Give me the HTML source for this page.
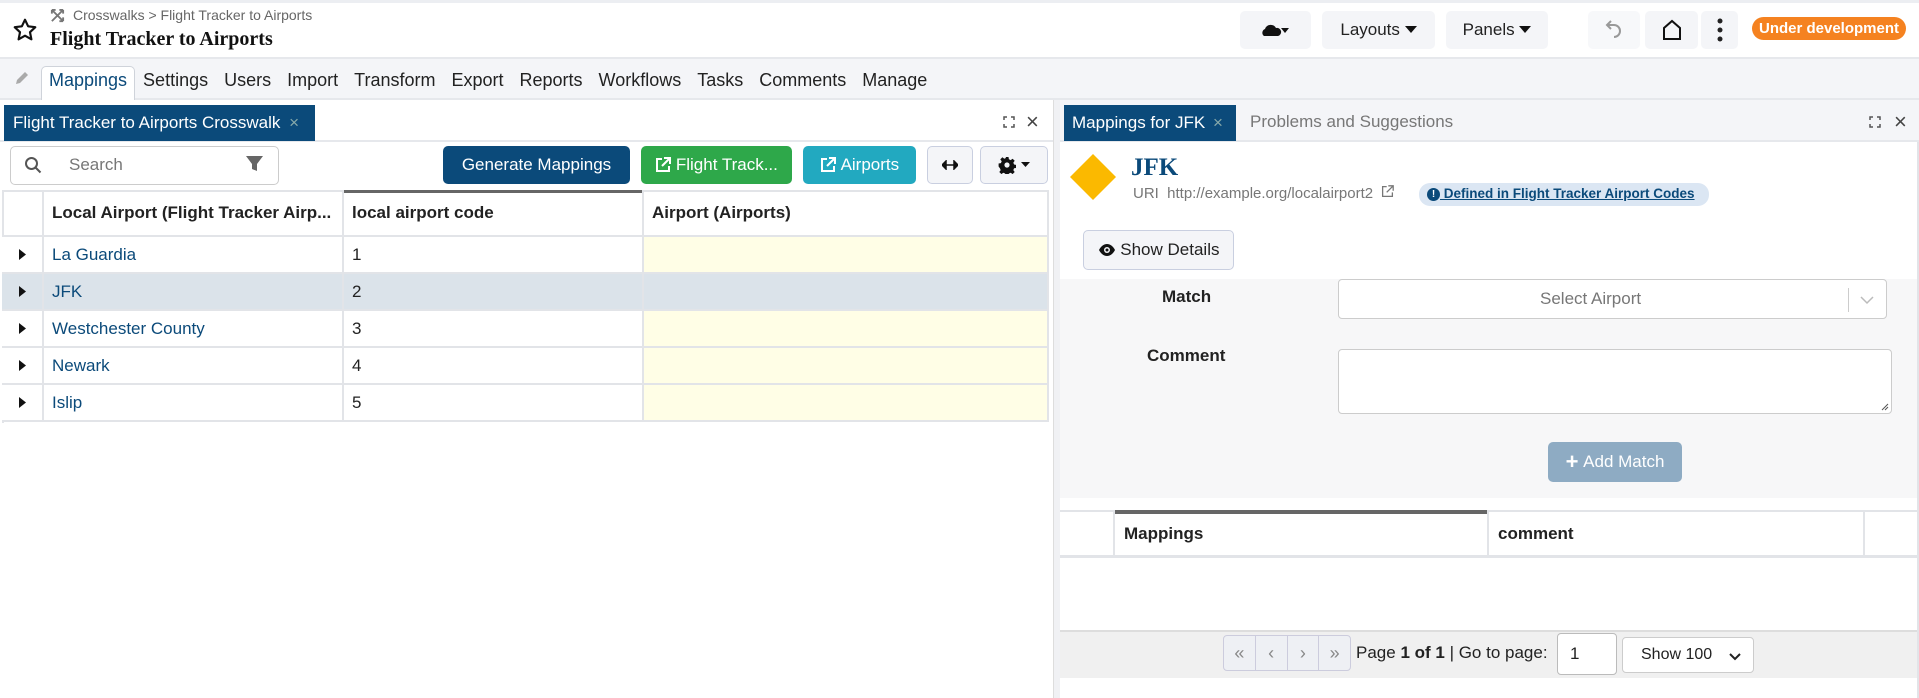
<!DOCTYPE html>
<html><head><meta charset="utf-8"><style>
*{box-sizing:border-box;margin:0;padding:0}
body{width:1919px;height:698px;position:relative;overflow:hidden;background:#fff;font-family:"Liberation Sans",sans-serif;color:#222;font-size:17px}
.a{position:absolute}
.btn{position:absolute;border-radius:5px;display:flex;align-items:center;justify-content:center;font-size:17px}
.nav span{margin-right:16px}
.cell{position:absolute;border-right:2px solid #e2e4e8;border-bottom:2px solid #e2e4e8;display:flex;align-items:center;padding-left:8px;font-size:17px}
</style></head><body>
<div class="a" style="left:0;top:0;width:1919px;height:3px;background:#eceef2"></div>
<svg class="a" style="left:12px;top:17px" width="26" height="26" viewBox="0 0 24 24"><path d="M12 2.5l2.9 6.1 6.6.8-4.9 4.6 1.3 6.6L12 17.3l-5.9 3.3 1.3-6.6L2.5 9.4l6.6-.8z" fill="none" stroke="#111" stroke-width="2" stroke-linejoin="round"/></svg>
<svg class="a" style="left:50px;top:8px" width="15" height="15" viewBox="0 0 16 16"><path d="M2 2l12 12M14 2L2 14M2 2h4M2 2v4M14 14h-4M14 14v-4M14 2h-4M14 2v4" stroke="#777" stroke-width="2" fill="none"/></svg>
<div class="a" style="left:73px;top:7px;font-size:14px;color:#666">Crosswalks &gt; Flight Tracker to Airports</div>
<div class="a" style="left:50px;top:28px;font-family:'Liberation Serif',serif;font-weight:bold;font-size:20px;color:#111">Flight Tracker to Airports</div>
<div class="btn" style="left:1240px;top:11px;width:71px;height:38px;background:#f4f5f8">
<svg width="30" height="16" viewBox="0 0 30 16"><path d="M3 14a4 4 0 0 1 1-7 6 6 0 0 1 11-1 4 4 0 0 1 2 8z" fill="#111"/><path d="M20 6h8l-4 5z" fill="#111"/></svg></div>
<div class="btn" style="left:1322px;top:11px;width:113px;height:38px;background:#f4f5f8">Layouts&nbsp;<svg width="12" height="8"><path d="M0 0h12l-6 7z" fill="#111"/></svg></div>
<div class="btn" style="left:1446px;top:11px;width:102px;height:38px;background:#f4f5f8">Panels&nbsp;<svg width="12" height="8"><path d="M0 0h12l-6 7z" fill="#111"/></svg></div>
<div class="btn" style="left:1588px;top:11px;width:52px;height:38px;background:#f7f8fa"><svg width="20" height="22" viewBox="0 0 20 22"><path d="M7 2L3 6l4 4M3 6h7a6 6 0 0 1 0 12" fill="none" stroke="#999" stroke-width="2"/></svg></div>
<div class="btn" style="left:1645px;top:11px;width:53px;height:38px;background:#f4f5f8"><svg width="22" height="22" viewBox="0 0 22 22"><path d="M3 20V9l8-7 8 7v11z" fill="none" stroke="#111" stroke-width="2"/></svg></div>
<div class="btn" style="left:1701px;top:11px;width:37px;height:38px;background:#f4f5f8"><svg width="6" height="24"><circle cx="3" cy="3" r="2.5" fill="#222"/><circle cx="3" cy="12" r="2.5" fill="#222"/><circle cx="3" cy="21" r="2.5" fill="#222"/></svg></div>
<div class="btn" style="left:1752px;top:17px;width:154px;height:23px;border-radius:12px;background:#f58220;color:#fff;font-weight:bold;font-size:15px">Under development</div>
<div class="a" style="left:0;top:57px;width:1919px;height:43px;background:#f4f5f8;border-top:2px solid #e6e8ec;border-bottom:2px solid #e6e8ec"></div>
<svg class="a" style="left:14px;top:70px" width="16" height="16" viewBox="0 0 16 16"><path d="M2 14l1-4 8-8 3 3-8 8z" fill="#aaa"/></svg>
<div class="a" style="left:41px;top:66px;width:94px;height:34px;background:#fff;border:1px solid #cfd3da;border-bottom:none;border-radius:5px 5px 0 0"></div>
<div class="a nav" style="left:49px;top:70px;font-size:18px;color:#222;white-space:nowrap"><span style="color:#0b4a7a">Mappings</span><span>Settings</span><span>Users</span><span>Import</span><span>Transform</span><span>Export</span><span>Reports</span><span>Workflows</span><span>Tasks</span><span>Comments</span><span>Manage</span></div>
<div class="a" style="left:0;top:100px;width:1058px;height:42px;background:#fff;border-bottom:2px solid #e6e8ec"></div>
<div class="a" style="left:4px;top:105px;width:311px;height:36px;background:#0b4a7a;color:#fff;font-size:17px;padding:8px 0 0 9px;white-space:nowrap">Flight Tracker to Airports Crosswalk <span style="color:#8aa;margin-left:4px">×</span></div>
<svg class="a" style="left:1003px;top:116px" width="12" height="12"><path d="M1 4V1h3M8 1h3v3M11 8v3H8M4 11H1V8" stroke="#555" stroke-width="1.5" fill="none"/></svg>
<div class="a" style="left:1026px;top:109px;font-size:22px;color:#444">×</div>
<div class="a" style="left:1053px;top:100px;width:7px;height:598px;background:#f0f1f4;border-left:1px solid #ddd"></div>
<div class="a" style="left:10px;top:146px;width:269px;height:39px;border:1px solid #ccc;border-radius:5px"></div>
<svg class="a" style="left:24px;top:156px" width="18" height="18" viewBox="0 0 18 18"><circle cx="7.5" cy="7.5" r="5.5" stroke="#555" stroke-width="2" fill="none"/><path d="M11.5 11.5l5 5" stroke="#555" stroke-width="2"/></svg>
<div class="a" style="left:69px;top:155px;color:#777">Search</div>
<svg class="a" style="left:246px;top:155px" width="17" height="17"><path d="M0 1h17l-6 8v7l-5-2V9z" fill="#666"/></svg>
<div class="btn" style="left:443px;top:146px;width:187px;height:38px;background:#0b4a7a;color:#fff">Generate Mappings</div>
<div class="btn" style="left:641px;top:146px;width:151px;height:38px;background:#2ea84a;color:#fff"><svg width="16" height="16" viewBox="0 0 16 16"><path d="M7 2H2v12h12V9M9 1h6v6M15 1L7 9" stroke="#fff" stroke-width="2" fill="none"/></svg>&nbsp;Flight Track...</div>
<div class="btn" style="left:803px;top:146px;width:113px;height:38px;background:#22a9c0;color:#fff"><svg width="16" height="16" viewBox="0 0 16 16"><path d="M7 2H2v12h12V9M9 1h6v6M15 1L7 9" stroke="#fff" stroke-width="2" fill="none"/></svg>&nbsp;Airports</div>
<div class="btn" style="left:927px;top:146px;width:46px;height:38px;background:#f4f5f8;border:1px solid #c9cfe0"><svg width="16" height="10"><path d="M0 5l4-4v8zM16 5l-4-4v8zM3 5h10" fill="#111" stroke="#111" stroke-width="1.5"/></svg></div>
<div class="btn" style="left:980px;top:146px;width:68px;height:38px;background:#f4f5f8;border:1px solid #c9cfe0"><svg width="18" height="18" viewBox="0 0 18 18"><path d="M7.5 1h3l.4 2.3 1.8.8 1.9-1.4 2.1 2.1-1.4 1.9.8 1.8 2.3.4v3l-2.3.4-.8 1.8 1.4 1.9-2.1 2.1-1.9-1.4-1.8.8-.4 2.3h-3l-.4-2.3-1.8-.8-1.9 1.4-2.1-2.1 1.4-1.9-.8-1.8L.6 10.5v-3l2.3-.4.8-1.8-1.4-1.9 2.1-2.1 1.9 1.4 1.8-.8z" fill="#111"/><circle cx="9" cy="9" r="2.6" fill="#f4f5f8"/></svg>&nbsp;<svg width="9" height="6"><path d="M0 0h9l-4.5 5z" fill="#111"/></svg></div>
<div class="a" style="left:2px;top:190px;width:1047px;height:233px;border:2px solid #e2e4e8;border-right:none;border-bottom:none"></div>
<div class="a" style="left:344px;top:190px;width:300px;height:3px;background:#666"></div>
<div class="cell" style="left:2px;top:190px;width:42px;height:47px"></div>
<div class="cell" style="left:44px;top:190px;width:300px;height:47px;font-weight:bold">Local Airport (Flight Tracker Airp...</div>
<div class="cell" style="left:344px;top:190px;width:300px;height:47px;font-weight:bold">local airport code</div>
<div class="cell" style="left:644px;top:190px;width:405px;height:47px;font-weight:bold">Airport (Airports)</div>
<div id="rows"></div>
<div class="a" style="left:1060px;top:100px;width:859px;height:42px;background:#f4f5f8;border-bottom:2px solid #e6e8ec"></div>
<div class="a" style="left:1064px;top:105px;width:172px;height:36px;background:#0b4a7a;color:#fff;padding:8px 0 0 8px;white-space:nowrap">Mappings for JFK <span style="color:#8aa;margin-left:3px">×</span></div>
<div class="a" style="left:1250px;top:112px;color:#777">Problems and Suggestions</div>
<svg class="a" style="left:1869px;top:116px" width="12" height="12"><path d="M1 4V1h3M8 1h3v3M11 8v3H8M4 11H1V8" stroke="#555" stroke-width="1.5" fill="none"/></svg>
<div class="a" style="left:1894px;top:109px;font-size:22px;color:#444">×</div>
<div class="a" style="left:1917px;top:142px;width:2px;height:556px;background:#e2e4e8"></div>
<svg class="a" style="left:1068px;top:152px" width="50" height="50"><path d="M25 2l23 23-23 23L2 25z" fill="#fbb900"/></svg>
<div class="a" style="left:1131px;top:154px;font-family:'Liberation Serif',serif;font-weight:bold;font-size:25px;color:#0b4a7a">JFK</div>
<div class="a" style="left:1133px;top:185px;font-size:15px;color:#777;white-space:nowrap">URI&nbsp; http://example.org/localairport2 &nbsp;<svg width="13" height="13" viewBox="0 0 16 16"><path d="M7 2H2v12h12V9M9 1h6v6M15 1L7 9" stroke="#777" stroke-width="1.6" fill="none"/></svg></div>
<div class="a" style="left:1419px;top:183px;width:290px;height:23px;background:#dbe6f3;border-radius:11px;font-size:13.5px;font-weight:bold;color:#0b4a7a;padding:3px 0 0 8px;text-decoration:underline;white-space:nowrap"><span style="display:inline-block;width:13px;height:13px;border-radius:7px;background:#0b4a7a;color:#fff;font-size:10px;text-align:center;line-height:13px;vertical-align:1px;text-decoration:none">!</span> Defined in Flight Tracker Airport Codes</div>
<div class="btn" style="left:1083px;top:230px;width:151px;height:40px;background:#f4f5f8;border:1px solid #c9cfe0">
<svg width="18" height="14" viewBox="0 0 18 14"><path d="M1 7c2-4 5-6 8-6s6 2 8 6c-2 4-5 6-8 6S3 11 1 7z" fill="#111"/><circle cx="9" cy="7" r="3" fill="#f4f5f8"/><circle cx="9" cy="7" r="1.5" fill="#111"/></svg>&nbsp;Show Details</div>
<div class="a" style="left:1060px;top:279px;width:857px;height:219px;background:#f7f7f8"></div>
<div class="a" style="left:1162px;top:287px;font-weight:bold">Match</div>
<div class="a" style="left:1338px;top:279px;width:549px;height:40px;background:#fff;border:1px solid #ccc;border-radius:4px"></div>
<div class="a" style="left:1540px;top:289px;color:#777">Select Airport</div>
<div class="a" style="left:1848px;top:288px;width:1px;height:24px;background:#ccc"></div>
<svg class="a" style="left:1860px;top:296px" width="14" height="9"><path d="M1 1l6 6 6-6" stroke="#bbb" stroke-width="1.5" fill="none"/></svg>
<div class="a" style="left:1147px;top:346px;font-weight:bold">Comment</div>
<div class="a" style="left:1338px;top:349px;width:554px;height:65px;background:#fff;border:1px solid #ccc;border-radius:4px"></div>
<svg class="a" style="left:1881px;top:403px" width="8" height="8"><path d="M1 7l6-6M4 7l3-3" stroke="#555"/></svg>
<div class="btn" style="left:1548px;top:442px;width:134px;height:40px;background:#8eabc3;color:#fff"><b style="font-size:22px;font-weight:bold">+</b>&nbsp;Add Match</div>
<div class="a" style="left:1060px;top:510px;width:857px;height:48px;border-top:2px solid #e2e4e8;border-bottom:3px solid #e2e4e8"></div>
<div class="a" style="left:1114px;top:510px;width:374px;height:4px;background:#666"></div>
<div class="a" style="left:1113px;top:510px;width:2px;height:48px;background:#e2e4e8"></div>
<div class="a" style="left:1487px;top:510px;width:2px;height:48px;background:#e2e4e8"></div>
<div class="a" style="left:1863px;top:510px;width:2px;height:48px;background:#e2e4e8"></div>
<div class="a" style="left:1124px;top:524px;font-weight:bold">Mappings</div>
<div class="a" style="left:1498px;top:524px;font-weight:bold">comment</div>
<div class="a" style="left:1060px;top:630px;width:857px;height:48px;background:#f0f0f0;border-top:2px solid #ddd"></div>
<div class="a" style="left:1223px;top:635px;width:128px;height:36px;border:1px solid #ccd;border-radius:4px;background:#eef0f4;display:flex;color:#888;font-size:18px">
<div style="flex:1;text-align:center;line-height:34px;border-right:1px solid #ccd">«</div><div style="flex:1;text-align:center;line-height:34px;border-right:1px solid #ccd">‹</div><div style="flex:1;text-align:center;line-height:34px;border-right:1px solid #ccd">›</div><div style="flex:1;text-align:center;line-height:34px">»</div></div>
<div class="a" style="left:1356px;top:643px">Page <b>1 of 1</b> | Go to page:</div>
<div class="a" style="left:1557px;top:633px;width:60px;height:42px;background:#fff;border:1px solid #bbb;border-radius:4px;padding:10px 0 0 12px">1</div>
<div class="a" style="left:1622px;top:637px;width:132px;height:36px;background:#fff;border:1px solid #ccc;border-radius:4px;padding:8px 0 0 18px;font-size:16px">Show 100<svg style="position:absolute;right:12px;top:15px" width="12" height="8"><path d="M1 1l5 5 5-5" stroke="#222" stroke-width="2" fill="none"/></svg></div>
<script>
var names=["La Guardia","JFK","Westchester County","Newark","Islip"],h="";
for(var i=0;i<5;i++){var t=237+i*37,sel=i==1,bg=sel?"#dbe3ea":"#fff",y=sel?"#dbe3ea":"#fffee6";
h+='<div class="cell" style="left:2px;top:'+t+'px;width:42px;height:37px;background:'+bg+';justify-content:center;padding:0"><svg width="7" height="11"><path d="M0 0l7 5.5L0 11z" fill="#111"/></svg></div>'+
'<div class="cell" style="left:44px;top:'+t+'px;width:300px;height:37px;background:'+bg+';color:#0b4a7a">'+names[i]+'</div>'+
'<div class="cell" style="left:344px;top:'+t+'px;width:300px;height:37px;background:'+bg+'">'+(i+1)+'</div>'+
'<div class="cell" style="left:644px;top:'+t+'px;width:405px;height:37px;background:'+y+'"></div>';}
document.getElementById("rows").innerHTML=h;
</script>
</body></html>
